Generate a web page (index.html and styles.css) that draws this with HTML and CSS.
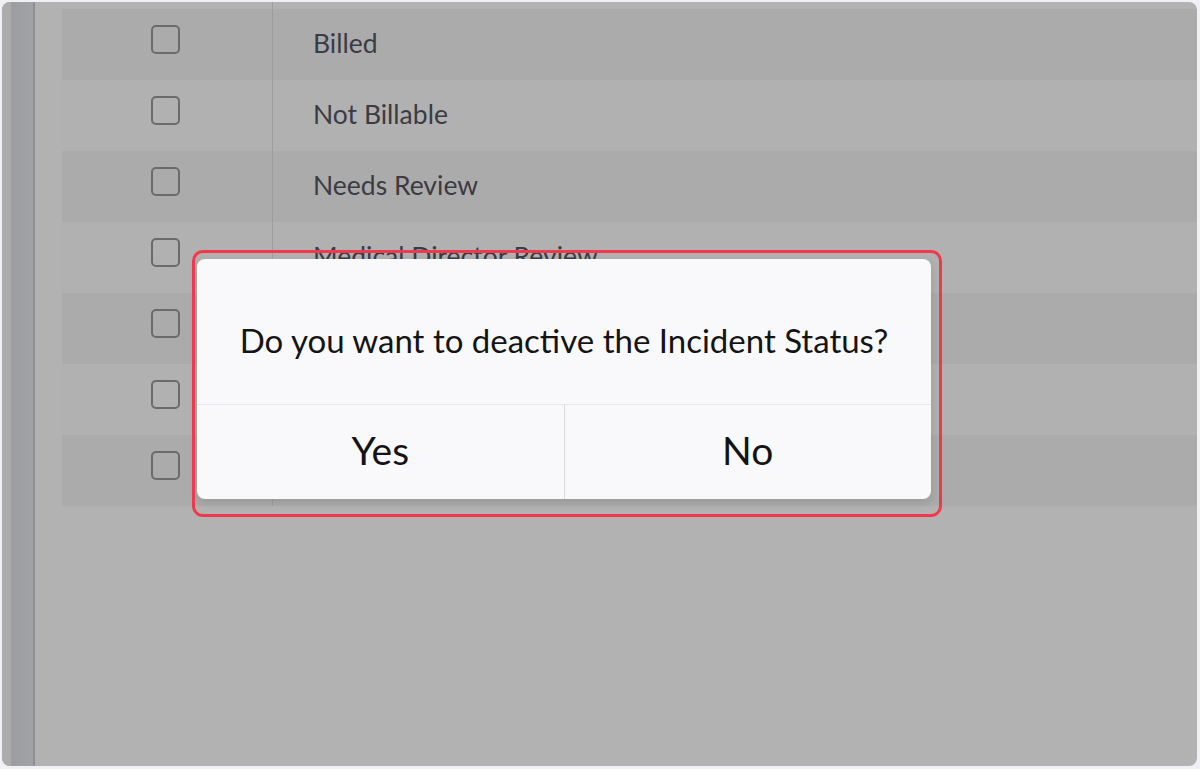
FILE: index.html
```html
<!DOCTYPE html>
<html lang="en">
<head>
<meta charset="utf-8">
<title>Incident Status</title>
<link rel="stylesheet" href="styles.css">
</head>
<body>
<div class="screen">
  <div class="sidebar">
    <div class="sb-edge"></div>
    <div class="sb-strip"></div>
    <div class="sb-line"></div>
  </div>
  <div class="main">
    <div class="table">
      <div class="row spacer"><div class="cell check"></div><div class="cell label"></div></div>
      <div class="row odd"><div class="cell check"><span class="box"></span></div><div class="cell label">Billed</div></div>
      <div class="row"><div class="cell check"><span class="box"></span></div><div class="cell label">Not Billable</div></div>
      <div class="row odd"><div class="cell check"><span class="box"></span></div><div class="cell label">Needs Review</div></div>
      <div class="row"><div class="cell check"><span class="box"></span></div><div class="cell label">Medical Director Review</div></div>
      <div class="row odd"><div class="cell check"><span class="box"></span></div><div class="cell label"></div></div>
      <div class="row"><div class="cell check"><span class="box"></span></div><div class="cell label"></div></div>
      <div class="row odd"><div class="cell check"><span class="box"></span></div><div class="cell label"></div></div>
    </div>
  </div>

  <div class="dialog">
    <div class="message">Do you want to deactive the Incident Status?</div>
    <div class="actions">
      <div class="btn">Yes</div>
      <div class="btn">No</div>
    </div>
  </div>
  <div class="highlight"></div>
</div>
</body>
</html>
```

FILE: styles.css
```css
html, body {
  margin: 0;
  padding: 0;
}

body {
  background: #f0f0f5;
  width: 1200px;
  height: 769px;
  overflow: hidden;
  font-family: Lato, "Open Sans", "Liberation Sans", sans-serif;
}

.screen {
  position: relative;
  margin: 2px 0 0 2px;
  width: 1195px;
  height: 764px;
  border-radius: 8px;
  overflow: hidden;
  background: #b2b2b2;
  display: flex;
}

/* left navigation strip (dimmed) */
.sidebar {
  display: flex;
  flex: 0 0 33px;
}

.sb-edge {
  width: 9px;
  background: #acacac;
}

.sb-strip {
  width: 22px;
  background: linear-gradient(to right, #9c9da1, #a2a3a6);
}

.sb-line {
  width: 2px;
  background: #8f8f91;
}

.main {
  flex: 1;
  padding-left: 27px;
}

.table {
  display: flex;
  flex-direction: column;
}

.row {
  display: flex;
  height: 71px;
  background: #b1b1b1;
}

.row.odd {
  background: #ababab;
}

.row.spacer {
  height: 7px;
  background: transparent;
}

.cell.check {
  flex: 0 0 211px;
  border-right: 1px solid #9d9d9d;
  display: flex;
  align-items: center;
  justify-content: center;
  padding-bottom: 10px;
  padding-right: 3px;
  box-sizing: border-box;
}

.box {
  width: 25px;
  height: 25px;
  border: 2px solid #6b6b6d;
  border-radius: 5px;
  box-sizing: content-box;
}

.cell.label {
  flex: 1;
  display: flex;
  align-items: center;
  padding-left: 40px;
  padding-bottom: 4px;
  font-size: 26.5px;
  color: #3b3b44;
}

/* confirm dialog */
.dialog {
  position: absolute;
  left: 195px;
  top: 257px;
  width: 734px;
  height: 240px;
  background: #f9f9fb;
  border-radius: 8px;
  box-shadow: 0 3px 10px rgba(0, 0, 0, 0.12);
  display: flex;
  flex-direction: column;
}

.message {
  height: 146px;
  box-sizing: border-box;
  padding-top: 16px;
  display: flex;
  align-items: center;
  justify-content: center;
  font-size: 33px;
  color: #141414;
  border-bottom: 1px solid #e7e7eb;
}

.actions {
  flex: 1;
  display: flex;
}

.btn {
  flex: 1;
  display: flex;
  align-items: center;
  justify-content: center;
  padding-bottom: 4px;
  font-size: 39px;
  color: #141414;
}

.btn + .btn {
  border-left: 1px solid #d9d9dc;
}

/* red annotation frame */
.highlight {
  position: absolute;
  left: 190px;
  top: 248px;
  width: 750px;
  height: 267px;
  box-sizing: border-box;
  border: 3px solid #f03a4b;
  border-radius: 11px;
}
```
